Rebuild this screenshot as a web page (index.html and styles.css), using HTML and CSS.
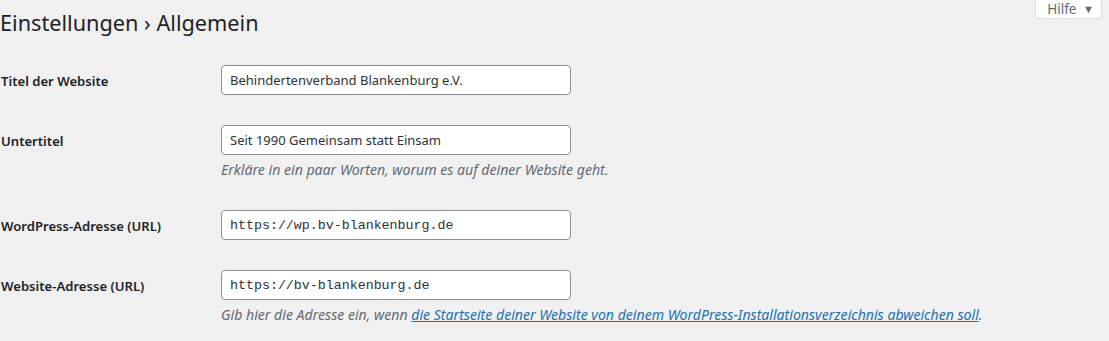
FILE: index.html
```html
<!DOCTYPE html>
<html lang="de">
	<head>
		<meta charset="UTF-8">
		<title>Allgemeine Einstellungen</title>
		<link rel="stylesheet" href="styles.css">
	</head>
	<body>
		<div class="wrap">
			<button class="help_toggle" type="button">Hilfe <span class="help_arrow">▼</span></button>
			<h1 class="page_title">Einstellungen › Allgemein</h1>
			<table class="form_table">
				<tr>
					<th><label for="blogname">Titel der Website</label></th>
					<td><input id="blogname" class="regular_text" type="text" value="Behindertenverband Blankenburg e.V."></td>
				</tr>
				<tr>
					<th><label for="blogdescription">Untertitel</label></th>
					<td>
						<input id="blogdescription" class="regular_text" type="text" value="Seit 1990 Gemeinsam statt Einsam">
						<p class="description">Erkläre in ein paar Worten, worum es auf deiner Website geht.</p>
					</td>
				</tr>
				<tr>
					<th><label for="siteurl">WordPress-Adresse (URL)</label></th>
					<td><input id="siteurl" class="regular_text code" type="url" value="https://wp.bv-blankenburg.de"></td>
				</tr>
				<tr>
					<th><label for="home">Website-Adresse (URL)</label></th>
					<td>
						<input id="home" class="regular_text code" type="url" value="https://bv-blankenburg.de">
						<p class="description">Gib hier die Adresse ein, wenn <a href="#">die Startseite deiner Website von deinem WordPress-Installationsverzeichnis abweichen soll</a>.</p>
					</td>
				</tr>
			</table>
		</div>
	</body>
</html>
```

FILE: styles.css
```css
*{
	margin: 0;
	padding: 0;
	box-sizing: border-box;
}
body{
	background-color: #f0f0f1;
	color: #1d2327;
	font-family: "Noto Sans", "Open Sans", sans-serif;
	font-size: 14px;
	overflow: hidden;
}
.wrap{
	position: relative;
	padding-top: 9px;
}
.page_title{
	font-size: 21.7px;
	font-weight: 400;
	line-height: 1.3;
	color: #1d2327;
	height: 41px;
}
.help_toggle{
	position: absolute;
	top: 0;
	right: 7px;
	width: 67px;
	height: 19px;
	padding: 0 0 0 4px;
	background: #fff;
	border: 1px solid #dcdcde;
	border-top: 0;
	border-radius: 0 0 4px 4px;
	color: #646970;
	font-family: inherit;
	font-size: 13.5px;
	line-height: 14px;
}
.help_arrow{
	font-size: 11px;
	margin-left: 3px;
	vertical-align: 1px;
}
.form_table{
	border-collapse: collapse;
}
.form_table th{
	width: 221px;
	padding: 23px 10px 17px 1px;
	text-align: left;
	vertical-align: top;
	font-size: 13.1px;
	font-weight: 600;
	line-height: 1.3;
}
.form_table td{
	padding: 15px 10px 15px 0;
	vertical-align: top;
	line-height: 1.3;
}
.regular_text{
	display: block;
	width: 350px;
	height: 30px;
	padding: 0 8px;
	background: #fff;
	border: 1px solid #8c8f94;
	border-radius: 4px;
	color: #2c3338;
	font-family: inherit;
	font-size: 13px;
}
.regular_text.code{
	font-family: "Liberation Mono", monospace;
	font-size: 13.3px;
}
.description{
	margin-top: 4px;
	font-size: 14.1px;
	font-style: italic;
	line-height: 1.5;
	color: #646970;
}
.description a{
	color: #2271b1;
}
```
